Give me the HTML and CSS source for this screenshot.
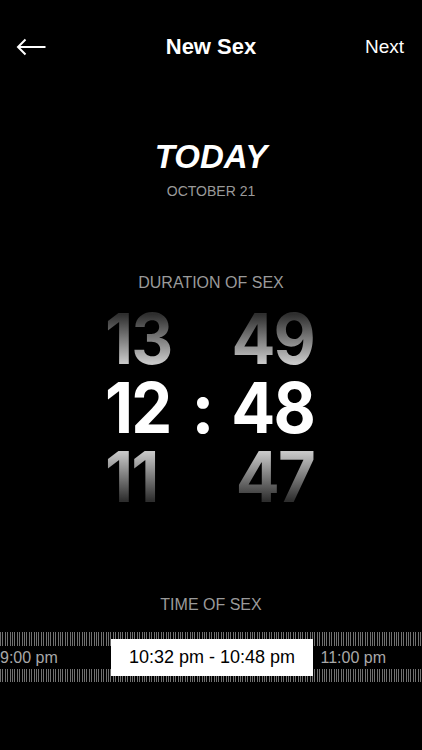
FILE: index.html
```html
<!DOCTYPE html>
<html lang="en">
<head>
    <meta charset="UTF-8">
    <meta name="viewport" content="width=device-width, initial-scale=1.0">
    <title>New Sex</title>
    <link rel="stylesheet" href="styles.css">
</head>
<body>
    <div class="nav">
        <button class="back" aria-label="Back">
            <svg width="30" height="18" viewBox="0 0 30 18">
                <path d="M1.5 9 H29.5 M9.5 1.5 L2 9 L9.5 16.5" fill="none" stroke="#fff" stroke-width="2"/>
            </svg>
        </button>
        <div class="nav-title">New Sex</div>
        <div class="nav-next">Next</div>
    </div>

    <div class="day">TODAY</div>
    <div class="date">OCTOBER 21</div>

    <div class="label duration-label">DURATION OF SEX</div>
    <div class="duration">
        <div class="row row-prev">
            <span class="num num-left">13</span>
            <span class="colon"></span>
            <span class="num num-right">49</span>
        </div>
        <div class="row row-current">
            <span class="num num-left">12</span>
            <span class="colon">:</span>
            <span class="num num-right">48</span>
        </div>
        <div class="row row-next">
            <span class="num num-left">11</span>
            <span class="colon"></span>
            <span class="num num-right">47</span>
        </div>
    </div>

    <div class="label time-label">TIME OF SEX</div>
    <div class="timeline">
        <div class="ticks"></div>
        <div class="hours">
            <span class="hour">9:00 pm</span>
            <span class="hour">11:00 pm</span>
        </div>
        <div class="ticks ticks-bottom"></div>
        <div class="selection">10:32 pm - 10:48 pm</div>
    </div>
</body>
</html>
```

FILE: styles.css
```css
body {
    margin: 0;
    background-color: #000;
    color: #fff;
    font-family: "Liberation Sans", Arial, sans-serif;
    width: 422px;
    height: 750px;
    overflow: hidden;
}

.nav {
    margin-top: 27px;
    height: 40px;
    display: flex;
    align-items: center;
    justify-content: space-between;
    padding: 0 18px 0 16px;
}

.back {
    background: none;
    border: none;
    padding: 0;
    width: 90px;
    height: 40px;
    display: flex;
    align-items: center;
}

.nav-title {
    font-size: 22px;
    font-weight: bold;
    line-height: 40px;
    margin-left: 2px;
}

.nav-next {
    width: 90px;
    text-align: right;
    font-size: 19px;
    line-height: 40px;
}

.day {
    margin-top: 70px;
    text-align: center;
    font-size: 33px;
    font-weight: bold;
    font-style: italic;
    line-height: 40px;
}

.date {
    margin-top: 4px;
    text-align: center;
    font-size: 14px;
    line-height: 20px;
    color: #9a9a9a;
}

.label {
    text-align: center;
    font-size: 16px;
    line-height: 20px;
    color: #9a9a9a;
}

.duration-label {
    margin-top: 72px;
}

.duration {
    width: 209px;
    margin: 11px 0 0 105px;
}

.row {
    display: flex;
    font-family: Inter, "Liberation Sans", sans-serif;
    font-size: 70px;
    font-weight: 700;
    line-height: 69px;
}

.num {
    letter-spacing: -2px;
}

.num-left {
    width: 86px;
    transform: scaleX(0.93);
    transform-origin: left center;
}

.num-right {
    width: 99px;
    text-align: right;
    transform: scaleX(0.93);
    transform-origin: right center;
}

.colon {
    width: 24px;
    text-align: center;
}

.row-prev .num {
    background: linear-gradient(#2e2e2e 15%, #c8c8c8 85%);
    -webkit-background-clip: text;
    background-clip: text;
    color: transparent;
}

.row-next .num {
    background: linear-gradient(#c8c8c8 15%, #2e2e2e 85%);
    -webkit-background-clip: text;
    background-clip: text;
    color: transparent;
}

.time-label {
    margin-top: 84px;
}

.timeline {
    position: relative;
    margin-top: 17px;
}

.ticks {
    height: 14px;
    background: repeating-linear-gradient(90deg, #707070 0 1px, #000 1px 2.4px);
}

.ticks-bottom {
    height: 13px;
}

.hours {
    height: 23px;
    display: flex;
    justify-content: space-between;
    padding-right: 36px;
    font-size: 16px;
    line-height: 23px;
    color: #a8a8a8;
}

.selection {
    position: absolute;
    left: 111px;
    top: 7px;
    width: 202px;
    height: 37px;
    background-color: #fff;
    color: #000;
    font-size: 18px;
    line-height: 37px;
    text-align: center;
}
```
